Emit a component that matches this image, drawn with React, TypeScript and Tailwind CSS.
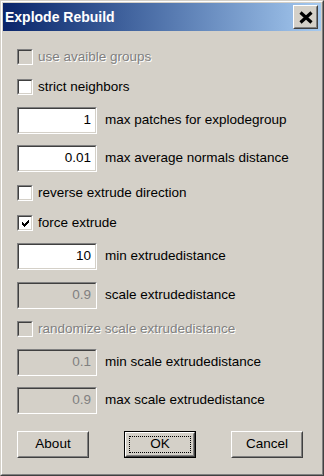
import React from 'react';

const FONT = "font-['Liberation_Sans',Arial,sans-serif]";

// classic checkmark, pixel rows
const CHECK_ROWS: [number, number][][] = [
  [[6, 1]],
  [[5, 2]],
  [[0, 1], [4, 3]],
  [[0, 2], [3, 3]],
  [[0, 5]],
  [[1, 3]],
  [[2, 1]],
];

function Check({ checked, disabled }: { checked?: boolean; disabled?: boolean }) {
  return (
    <div className="w-4 h-4 shrink-0 border border-t-[#808080] border-l-[#808080] border-r-white border-b-white">
      <div
        className={
          disabled
            ? 'w-full h-full border border-t-[#404040] border-l-[#404040] border-r-[#d4d0c8] border-b-[#d4d0c8] bg-[#d4d0c8] flex items-center justify-center'
            : 'w-full h-full border border-t-[#404040] border-l-[#404040] border-r-[#d4d0c8] border-b-[#d4d0c8] bg-white flex items-center justify-center'
        }
      >
        {checked ? (
          <svg width="7" height="7" viewBox="0 0 7 7" shapeRendering="crispEdges">
            {CHECK_ROWS.map((row, y) =>
              row.map(([x, w], i) => <rect key={`${y}-${i}`} x={x} y={y} width={w} height={1} fill="#000" />)
            )}
          </svg>
        ) : null}
      </div>
    </div>
  );
}

function CheckRow({ label, checked, disabled }: { label: string; checked?: boolean; disabled?: boolean }) {
  return (
    <div className="flex items-center h-4 gap-[5px]">
      <Check checked={checked} disabled={disabled} />
      <span
        className={
          disabled
            ? 'text-[13.5px] leading-none text-[#808080] [text-shadow:1px_1px_0_#fff] whitespace-nowrap'
            : 'text-[13.5px] leading-none text-black whitespace-nowrap'
        }
      >
        {label}
      </span>
    </div>
  );
}

function Field({ value, label, disabled }: { value: string; label: string; disabled?: boolean }) {
  return (
    <div className="flex items-center h-[27px] gap-2">
      <div className="w-[80px] h-[27px] shrink-0 border border-t-[#808080] border-l-[#808080] border-r-white border-b-white">
        <div
          className={
            disabled
              ? 'w-full h-full border border-t-[#404040] border-l-[#404040] border-r-[#d4d0c8] border-b-[#d4d0c8] bg-[#d4d0c8] text-[#808080] flex items-center justify-end pr-1 text-[13.5px]'
              : 'w-full h-full border border-t-[#404040] border-l-[#404040] border-r-[#d4d0c8] border-b-[#d4d0c8] bg-white text-black flex items-center justify-end pr-1 text-[13.5px]'
          }
        >
          {value}
        </div>
      </div>
      <span className="text-[13.5px] text-black whitespace-nowrap">{label}</span>
    </div>
  );
}

function Btn({ label, isDefault }: { label: string; isDefault?: boolean }) {
  if (isDefault) {
    return (
      <div className="w-[72px] h-[27px] border border-black">
        <div className="w-full h-full border border-t-white border-l-white border-r-[#404040] border-b-[#404040]">
          <div className="w-full h-full border border-t-[#d4d0c8] border-l-[#d4d0c8] border-r-[#808080] border-b-[#808080] p-[2px]">
            <div className="w-full h-full border border-dotted border-black flex items-center justify-center text-[13.5px] text-black">
              {label}
            </div>
          </div>
        </div>
      </div>
    );
  }
  return (
    <div className="w-[72px] h-[27px] border border-t-white border-l-white border-r-[#404040] border-b-[#404040]">
      <div className="w-full h-full border border-t-[#d4d0c8] border-l-[#d4d0c8] border-r-[#808080] border-b-[#808080] flex items-center justify-center text-[13.5px] text-black">
        {label}
      </div>
    </div>
  );
}

export default function App() {
  return (
    <div className={`w-[324px] h-[476px] bg-[#d4d0c8] ${FONT} border border-t-[#d4d0c8] border-l-[#d4d0c8] border-r-[#404040] border-b-[#404040]`}>
      <div className="w-full h-full border border-t-white border-l-white border-r-[#808080] border-b-[#808080] p-px flex flex-col">
        {/* Titelleiste */}
        <div className="h-[28px] shrink-0 bg-gradient-to-r from-[#0a246a] to-[#a6caf0] flex items-center justify-between pl-[2px] pr-[3px]">
          <span className="text-white font-bold text-[14px] whitespace-nowrap">Explode Rebuild</span>
          <div className="w-[25px] h-[24px] border border-t-white border-l-white border-r-[#404040] border-b-[#404040]">
            <div className="w-full h-full bg-[#d4d0c8] border border-t-[#d4d0c8] border-l-[#d4d0c8] border-r-[#808080] border-b-[#808080] flex items-center justify-center">
              <svg width="14" height="13" viewBox="0 0 14 13">
                <path d="M1.5 1.5 L12.5 11.5 M12.5 1.5 L1.5 11.5" stroke="#000" strokeWidth="3.2" />
              </svg>
            </div>
          </div>
        </div>

        {/* Inhalt */}
        <div className="flex flex-col pl-[14px] pr-4">
          <div className="mt-[18px]">
            <CheckRow label="use avaible groups" disabled />
          </div>
          <div className="mt-[14px]">
            <CheckRow label="strict neighbors" />
          </div>
          <div className="mt-[12px]">
            <Field value="1" label="max patches for explodegroup" />
          </div>
          <div className="mt-[11px]">
            <Field value="0.01" label="max average normals distance" />
          </div>
          <div className="mt-[13px]">
            <CheckRow label="reverse extrude direction" />
          </div>
          <div className="mt-[14px]">
            <CheckRow label="force extrude" checked />
          </div>
          <div className="mt-[12px]">
            <Field value="10" label="min extrudedistance" />
          </div>
          <div className="mt-[12px]">
            <Field value="0.9" label="scale extrudedistance" disabled />
          </div>
          <div className="mt-[12px]">
            <CheckRow label="randomize scale extrudedistance" disabled />
          </div>
          <div className="mt-[12px]">
            <Field value="0.1" label="min scale extrudedistance" disabled />
          </div>
          <div className="mt-[11px]">
            <Field value="0.9" label="max scale extrudedistance" disabled />
          </div>
          <div className="mt-[17px] flex justify-between pr-[2px]">
            <Btn label="About" />
            <Btn label="OK" isDefault />
            <Btn label="Cancel" />
          </div>
        </div>
      </div>
    </div>
  );
}
